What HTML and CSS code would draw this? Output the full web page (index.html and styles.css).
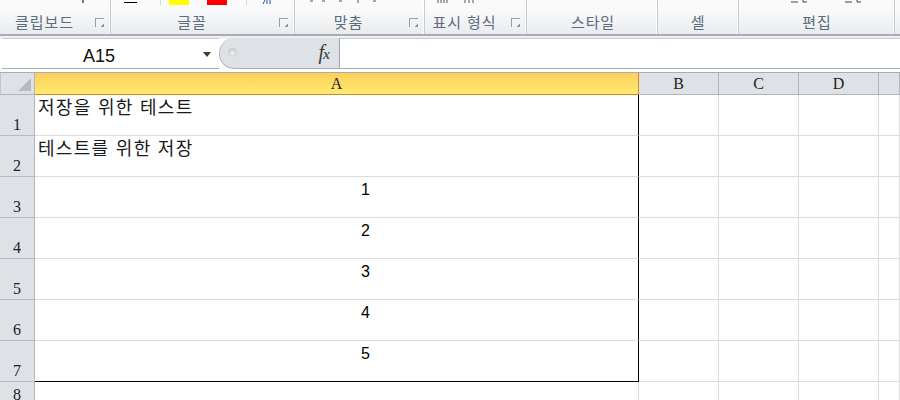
FILE: index.html
```html
<!DOCTYPE html>
<html lang="ko">
<head>
<meta charset="utf-8">
<title>Excel</title>
<link rel="stylesheet" href="styles.css">
</head>
<body>
<div class="app">
  <div class="ribbon">
    <svg class="clipped" width="900" height="8" viewBox="0 0 900 8">
      <rect x="82" y="0" width="2" height="3" fill="#777"/>
      <rect x="124" y="2" width="13" height="1" fill="#000"/>
      <rect x="160" y="0" width="1" height="5" fill="#d5d8dd"/>
      <rect x="169" y="0" width="20" height="5" fill="#ffff00"/>
      <rect x="207" y="0" width="20" height="5" fill="#ff0000"/>
      <rect x="246" y="0" width="1" height="5" fill="#d5d8dd"/>
      <path d="M263 4l2-4M267 0v4M270 0v4" stroke="#2a50a0" fill="none"/>
      <path d="M310 1h3M322 1h3M339 1h3M358 0v3M373 1h3" stroke="#555" fill="none"/>
      <path d="M438 0v3M441 0v3M444 0v3M447 0v3M465 0v3M469 0v3M473 0v3" stroke="#555" fill="none"/>
      <path d="M791 2h7M803 0v2h4M845 2h7M857 0v2h4" stroke="#444" fill="none"/>
    </svg>
    <div class="group g1"><span class="glabel">클립보드</span><i class="launcher"></i></div>
    <div class="group g2"><span class="glabel">글꼴</span><i class="launcher"></i></div>
    <div class="group g3"><span class="glabel">맞춤</span><i class="launcher"></i></div>
    <div class="group g4"><span class="glabel">표시 형식</span><i class="launcher"></i></div>
    <div class="group g5"><span class="glabel">스타일</span></div>
    <div class="group g6"><span class="glabel">셀</span></div>
    <div class="group g7"><span class="glabel">편집</span></div>
    <div class="group g8"></div>
  </div>
  <div class="formula-bar">
    <div class="namebox"><span class="cellref">A15</span><i class="caret"></i></div>
    <div class="fx-area">
      <i class="knob"></i>
      <span class="fx"><em>f</em><em class="x">x</em></span>
    </div>
    <div class="formula-input"></div>
  </div>
  <div class="sheet">
    <div class="corner"><i class="tri"></i></div>
    <div class="colh active">A</div>
    <div class="colh">B</div>
    <div class="colh">C</div>
    <div class="colh">D</div>
    <div class="colh"></div>

    <div class="rowh">1</div>
    <div class="cell a top"><span class="ko">저장을 위한 테스트</span></div>
    <div class="cell"></div><div class="cell"></div><div class="cell"></div><div class="cell"></div>

    <div class="rowh">2</div>
    <div class="cell a"><span class="ko">테스트를 위한 저장</span></div>
    <div class="cell"></div><div class="cell"></div><div class="cell"></div><div class="cell"></div>

    <div class="rowh">3</div>
    <div class="cell a num">1</div>
    <div class="cell"></div><div class="cell"></div><div class="cell"></div><div class="cell"></div>

    <div class="rowh">4</div>
    <div class="cell a num">2</div>
    <div class="cell"></div><div class="cell"></div><div class="cell"></div><div class="cell"></div>

    <div class="rowh">5</div>
    <div class="cell a num">3</div>
    <div class="cell"></div><div class="cell"></div><div class="cell"></div><div class="cell"></div>

    <div class="rowh">6</div>
    <div class="cell a num">4</div>
    <div class="cell"></div><div class="cell"></div><div class="cell"></div><div class="cell"></div>

    <div class="rowh">7</div>
    <div class="cell a num last">5</div>
    <div class="cell"></div><div class="cell"></div><div class="cell"></div><div class="cell"></div>

    <div class="rowh short">8</div>
    <div class="cell"></div>
    <div class="cell"></div><div class="cell"></div><div class="cell"></div><div class="cell"></div>
  </div>
</div>
</body>
</html>
```
FILE: styles.css
```css
* { box-sizing: border-box; }
html, body { margin: 0; padding: 0; }
body { width: 900px; height: 400px; overflow: hidden; background: #fff; font-family: "Noto Sans CJK KR", sans-serif; }
.app { width: 900px; height: 400px; display: flex; flex-direction: column; overflow: hidden; }

.ribbon { position: relative; height: 36px; display: flex; background: linear-gradient(#fbfbfc, #f8f9fa 12px, #e9ebee); border-bottom: 2px solid #a9adb2; flex: none; }
.clipped { position: absolute; left: 0; top: 0; }
.group { position: relative; display: flex; justify-content: center; align-items: flex-end; border-right: 1px solid #fff; box-shadow: 1px 0 0 #c9ccd1; padding-bottom: 2px; }
.g1 { width: 110px; }
.g2 { width: 184px; }
.g3 { width: 130px; }
.g4 { width: 102px; }
.g5 { width: 131px; }
.g6 { width: 81px; }
.g7 { width: 156px; }
.g8 { flex: 1; border-right: 0; box-shadow: none; }
.g1 .glabel { margin-right: 20px; }
.g2 .glabel { margin-right: 19px; }
.g3 .glabel { margin-right: 20px; }
.g4 .glabel { margin-right: 20px; }
.g5 .glabel { margin-left: 4px; }
.g6 .glabel { margin-left: 2px; }
.g7 .glabel { margin-left: 3px; }
.glabel { font-size: 15px; line-height: 20px; color: #5d6b7e; letter-spacing: .9px; }
.launcher { position: absolute; right: 5px; top: 18px; width: 9px; height: 9px; border-top: 1px solid #9a9ea4; border-left: 1px solid #9a9ea4; background: linear-gradient(135deg, transparent 45%, #8d9198 45%, #8d9198 100%) 4px 4px / 5px 5px no-repeat; }

.formula-bar { height: 36px; display: flex; flex: none; background: linear-gradient(#eef0f2 3px, #fff 3px); padding: 2px 0 3px 2px; }
.namebox { width: 217px; display: flex; align-items: center; position: relative; background: #fff; border-top: 1px solid #c5c8cc; border-bottom: 1px solid #a9adb2; padding-top: 4px; }
.cellref { margin-left: 81px; font: 18px/22px "Liberation Sans", sans-serif; color: #111; }
.caret { position: absolute; left: 201px; top: 13px; width: 0; height: 0; border: 4px solid transparent; border-top: 5px solid #3c3c3c; border-bottom: 0; }
.fx-area { position: relative; width: 121px; background: #dee1e5; border-left: 1px solid #b4b7bc; border-right: 1px solid #a3a7ad; border-bottom: 1px solid #a9adb2; border-radius: 15px 0 0 15px; display: flex; justify-content: flex-end; align-items: center; padding-right: 9px; }
.knob { position: absolute; left: 8px; top: 10px; width: 9px; height: 9px; border-radius: 50%; background: radial-gradient(circle at 50% 60%, #f2f3f4, #b5b8bc); }
.fx { font: italic 20px/20px "Liberation Serif", serif; color: #3a3a3a; }
.fx em { font-style: italic; }
.fx .x { font-size: 14px; font-weight: bold; color: #555; margin-left: -1px; }
.formula-input { flex: 1; background: #fff; border-top: 1px solid #c5c8cc; border-bottom: 1px solid #a9adb2; }

.sheet { flex: 1; display: grid; grid-template-columns: 35px 604px 80px 80px 80px 21px; grid-template-rows: 22px repeat(7, 41px) 23px; background: #fff; border-top: 1px solid #a9adb2; }
.corner { background: #dee1e6; border-right: 1px solid #b2b5ba; border-bottom: 1px solid #b2b5ba; border-left: 1px solid #c2c5c9; position: relative; }
.tri { position: absolute; right: 3px; bottom: 3px; width: 0; height: 0; border-style: solid; border-width: 0 0 13px 13px; border-color: transparent transparent #b7bbc0 transparent; }
.colh { background: #dee1e6; border-right: 1px solid #b2b5ba; border-bottom: 1px solid #b2b5ba; font: 16px/22px "Liberation Serif", serif; color: #222; text-align: center; }
.colh.active { background: linear-gradient(#fdd15a, #ffe971); border-right: 1px solid #c78c25; border-bottom: 1px solid #c78c25; }
.rowh { background: #dee1e6; border-right: 1px solid #b2b5ba; border-bottom: 1px solid #b8bbc0; font: 16px/19px "Liberation Serif", serif; color: #222; text-align: center; display: flex; align-items: flex-end; justify-content: center; padding-bottom: 1px; }
.rowh.short { border-bottom: 0; padding-bottom: 1px; }
.cell { border-right: 1px solid #dcdcdc; border-bottom: 1px solid #dcdcdc; font: 16px/22px "Liberation Sans", sans-serif; color: #000; }
.cell.a { border-right: 1px solid #000; padding-left: 3px; }
.cell.last { border-bottom: 1px solid #000; }
.num { text-align: center; padding-top: 2px; padding-left: 58px !important; }
.ko { display: block; font-family: "Noto Sans CJK KR", sans-serif; font-size: 18px; line-height: 22px; letter-spacing: 1.3px; color: #1a1a1a; }
```
